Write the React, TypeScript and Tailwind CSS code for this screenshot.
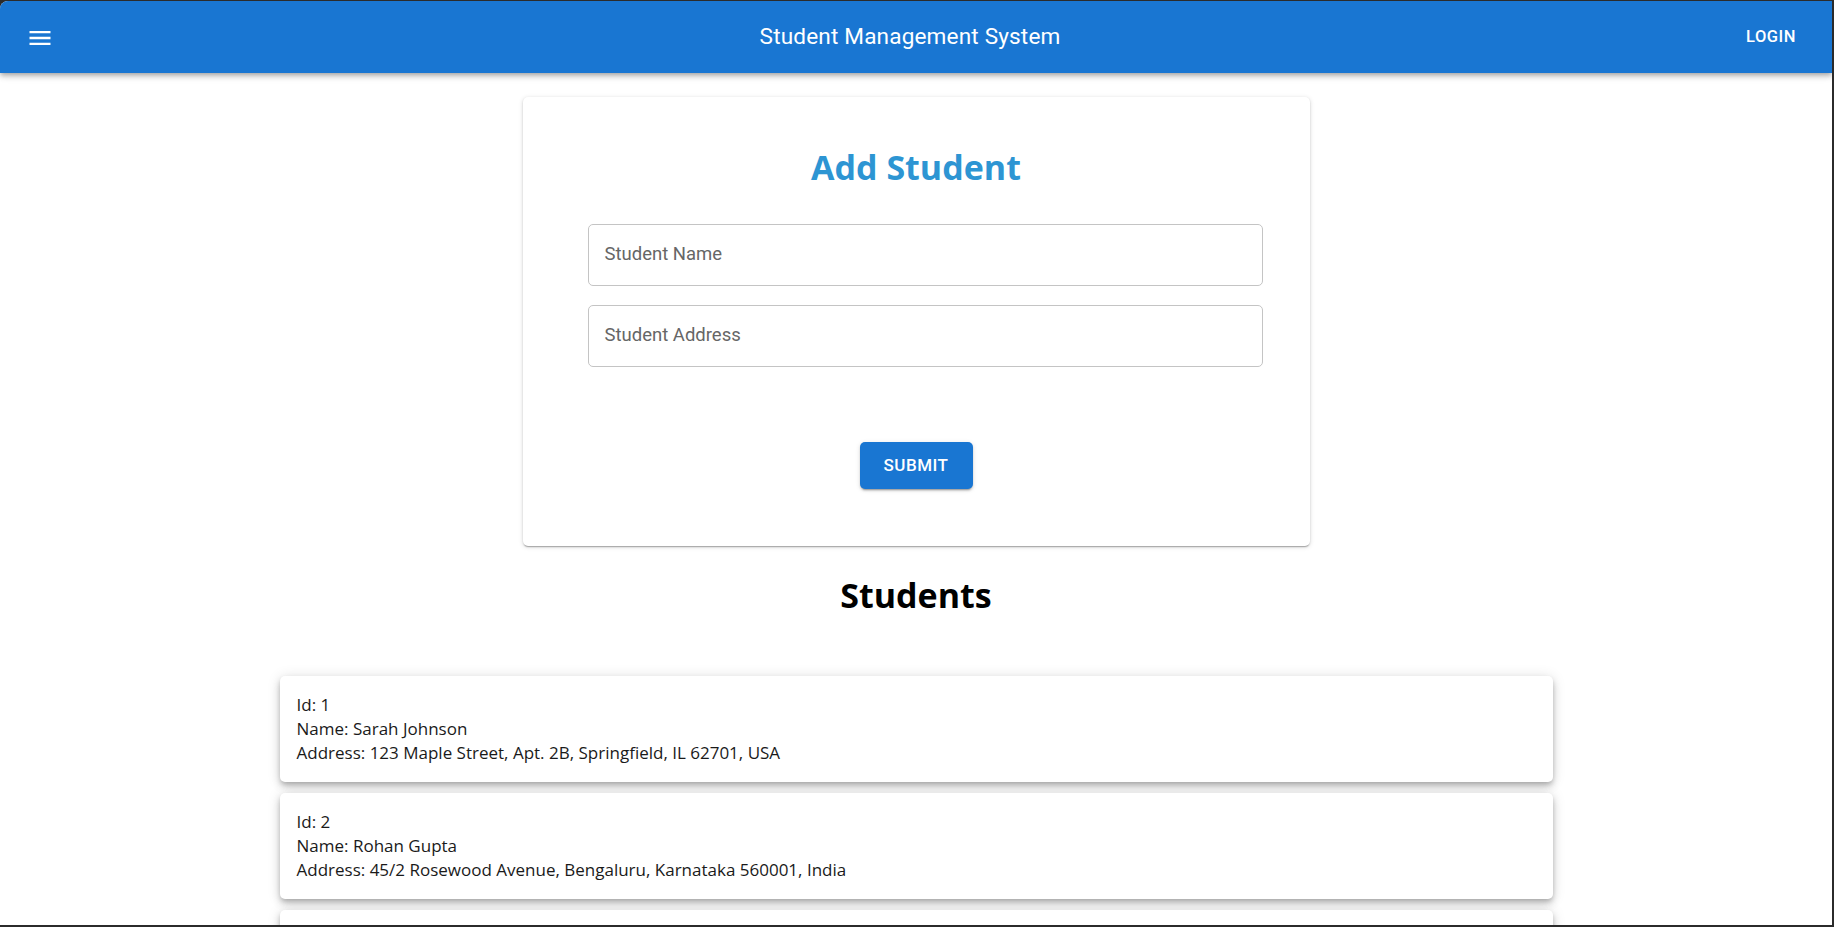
import React from "react";

const students = [
  { id: 1, name: "Sarah Johnson", address: "123 Maple Street, Apt. 2B, Springfield, IL 62701, USA" },
  { id: 2, name: "Rohan Gupta", address: "45/2 Rosewood Avenue, Bengaluru, Karnataka 560001, India" },
  { id: 3, name: "Emily Clarke", address: "78 King's Road, London SW3 4NX, United Kingdom" },
];

const roboto = "font-['Roboto','Helvetica','Arial',sans-serif]";
const segoe = "font-['Open_Sans','Noto_Sans',sans-serif]";

function MenuIcon() {
  return (
    <svg className="h-[28px] w-[28px]" viewBox="0 0 24 24" fill="currentColor">
      <path d="M3 18h18v-2H3v2zm0-5h18v-2H3v2zm0-7v2h18V6H3z" />
    </svg>
  );
}

function Field({ label }: { label: string }) {
  return (
    <div className="flex h-[62px] w-full items-center rounded-[5px] border border-[#c4c4c4] px-[16px]">
      <span className={`${roboto} text-[18.5px] text-[#666666]`}>{label}</span>
    </div>
  );
}

export default function App() {
  return (
    <div className="h-screen w-full overflow-hidden bg-[#2b2b2b] pt-px pr-[2px] pb-[2px]">
      <div className="h-full w-full overflow-hidden rounded-tl-[8px] bg-white">
        {/* App bar */}
        <header className="relative z-10 flex h-[72px] items-center bg-[#1976d2] px-[26px] text-white shadow-[0_2px_4px_-1px_rgba(0,0,0,0.2),0_4px_5px_0_rgba(0,0,0,0.14),0_1px_10px_0_rgba(0,0,0,0.12)]">
          <div className="mt-[1px] flex">
            <MenuIcon />
          </div>
          <h1 className={`${roboto} flex-1 pl-[30px] text-center text-[22.6px] font-normal tracking-[0.15px]`}>
            Student Management System
          </h1>
          <button className={`${roboto} px-[10px] text-[16.5px] font-medium tracking-[0.5px] uppercase`}>Login</button>
        </header>

        {/* Add student form */}
        <div className="flex flex-col items-center pt-[24px]">
          <div className="flex w-[787px] flex-col items-center rounded-[5px] bg-white pt-[50px] pb-[57px] shadow-[0_2px_1px_-1px_rgba(0,0,0,0.2),0_1px_2px_0_rgba(0,0,0,0.14),0_1px_5px_0_rgba(0,0,0,0.14)]">
            <h2 className={`${segoe} text-[34px] leading-[40px] font-bold text-[#2d95d3]`}>Add Student</h2>
            <div className="mt-[37px] ml-[65px] mr-[47px] flex flex-col gap-[19px] self-stretch">
              <Field label="Student Name" />
              <Field label="Student Address" />
            </div>
            <button
              className={`${roboto} mt-[75px] h-[47px] w-[113px] rounded-[5px] bg-[#1976d2] text-[17px] font-medium tracking-[0.5px] text-white uppercase shadow-[0_3px_1px_-2px_rgba(0,0,0,0.2),0_2px_2px_0_rgba(0,0,0,0.14),0_1px_5px_0_rgba(0,0,0,0.12)]`}
            >
              Submit
            </button>
          </div>

          <h2 className={`${segoe} mt-[29px] text-[34px] leading-[40px] font-bold text-black`}>Students</h2>

          {/* Student list */}
          <div className="mt-[61px] flex w-[1273px] flex-col gap-[11px]">
            {students.map((s) => (
              <div
                key={s.id}
                className={`${segoe} rounded-[5px] bg-white px-[17px] py-[17px] text-[17px] leading-[24px] text-[#1a1a1a] shadow-[0_3px_5px_-1px_rgba(0,0,0,0.2),0_5px_8px_0_rgba(0,0,0,0.14),0_1px_14px_0_rgba(0,0,0,0.12)]`}
              >
                <div>Id: {s.id}</div>
                <div>Name: {s.name}</div>
                <div>Address: {s.address}</div>
              </div>
            ))}
          </div>
        </div>
      </div>
    </div>
  );
}
